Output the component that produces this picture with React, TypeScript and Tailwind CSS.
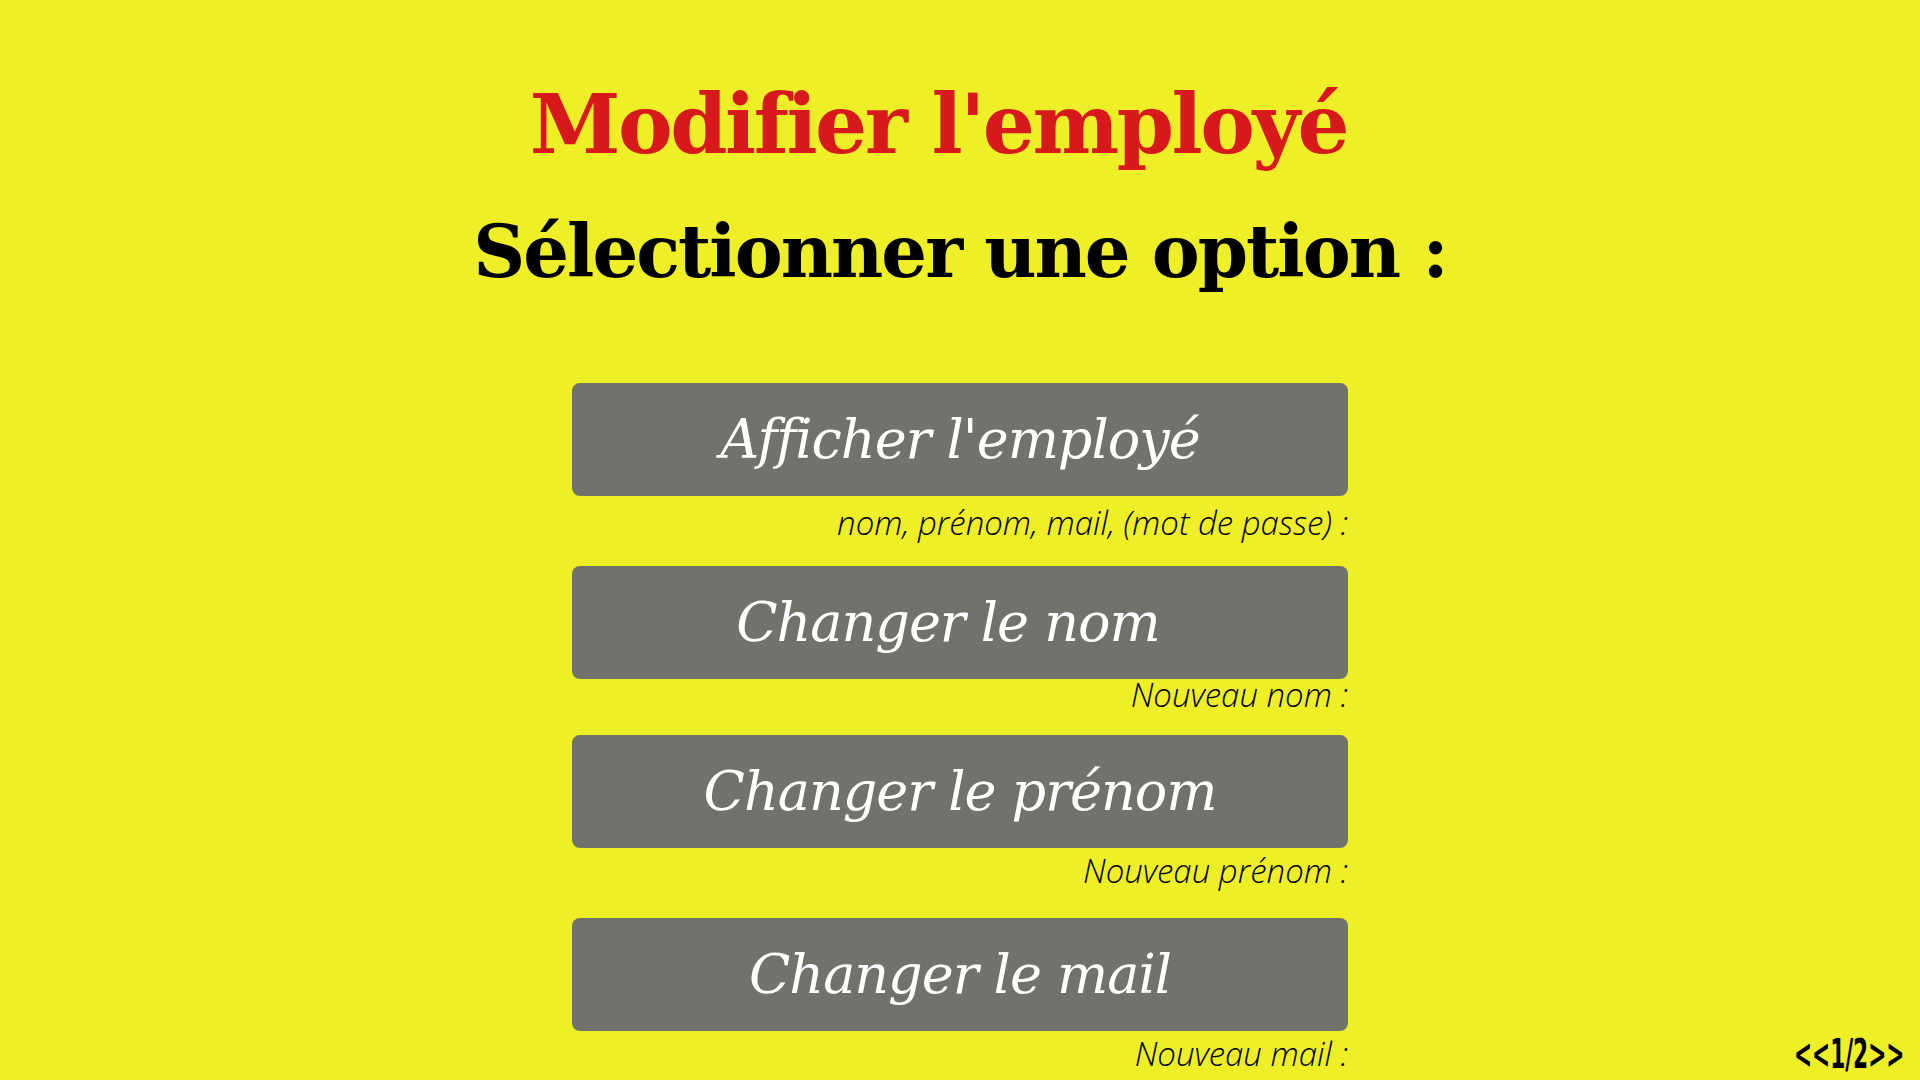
const options = [
  { label: "Afficher l'employé", hint: 'nom, prénom, mail, (mot de passe) :', mt: 'mt-0', hintMt: 'mt-[7px]' },
  { label: 'Changer le nom', hint: 'Nouveau nom :', mt: 'mt-[23px]', hintMt: 'mt-[-4px]', shift: 'pr-[24px]' },
  { label: 'Changer le prénom', hint: 'Nouveau prénom :', mt: 'mt-[20px]', hintMt: 'mt-[3px]' },
  { label: 'Changer le mail', hint: 'Nouveau mail :', mt: 'mt-[27px]', hintMt: 'mt-[3px]' },
];

const App = () => {
  return (
    <div className="relative min-h-screen w-full overflow-hidden bg-[#efef27]">
      <div className="flex flex-col items-center">
        <h1 className="mt-[83px] mr-[43px] text-[82px] leading-none font-bold text-[#d7191c] font-['DejaVu_Serif',serif] tracking-[-2.5px]">
          Modifier l'employé
        </h1>
        <h2 className="mt-[51px] text-[72px] leading-none font-bold text-black font-['DejaVu_Serif',serif] tracking-[-2px]">
          Sélectionner une option :
        </h2>

        <div className="mt-[95px] flex w-[776px] flex-col">
          {options.map((opt) => (
            <div key={opt.label} className={`flex flex-col ${opt.mt}`}>
              <button
                className={`flex h-[113px] w-full items-center justify-center rounded-lg bg-[#72726d] text-[54px] italic text-white font-['DejaVu_Serif',serif] tracking-[-1px] ${opt.shift ?? ''}`}
              >
                {opt.label}
              </button>
              <span
                className={`${opt.hintMt} self-end text-[33px] leading-[40px] font-light italic text-black font-['Open_Sans',sans-serif]`}
              >
                {opt.hint}
              </span>
            </div>
          ))}
        </div>
      </div>

      <div className="absolute bottom-[6px] right-[16px] origin-right scale-x-[0.54] text-[40px] font-bold leading-none text-black font-['DejaVu_Sans',sans-serif]">
        &lt;&lt;1/2&gt;&gt;
      </div>
    </div>
  );
};

export default App;
